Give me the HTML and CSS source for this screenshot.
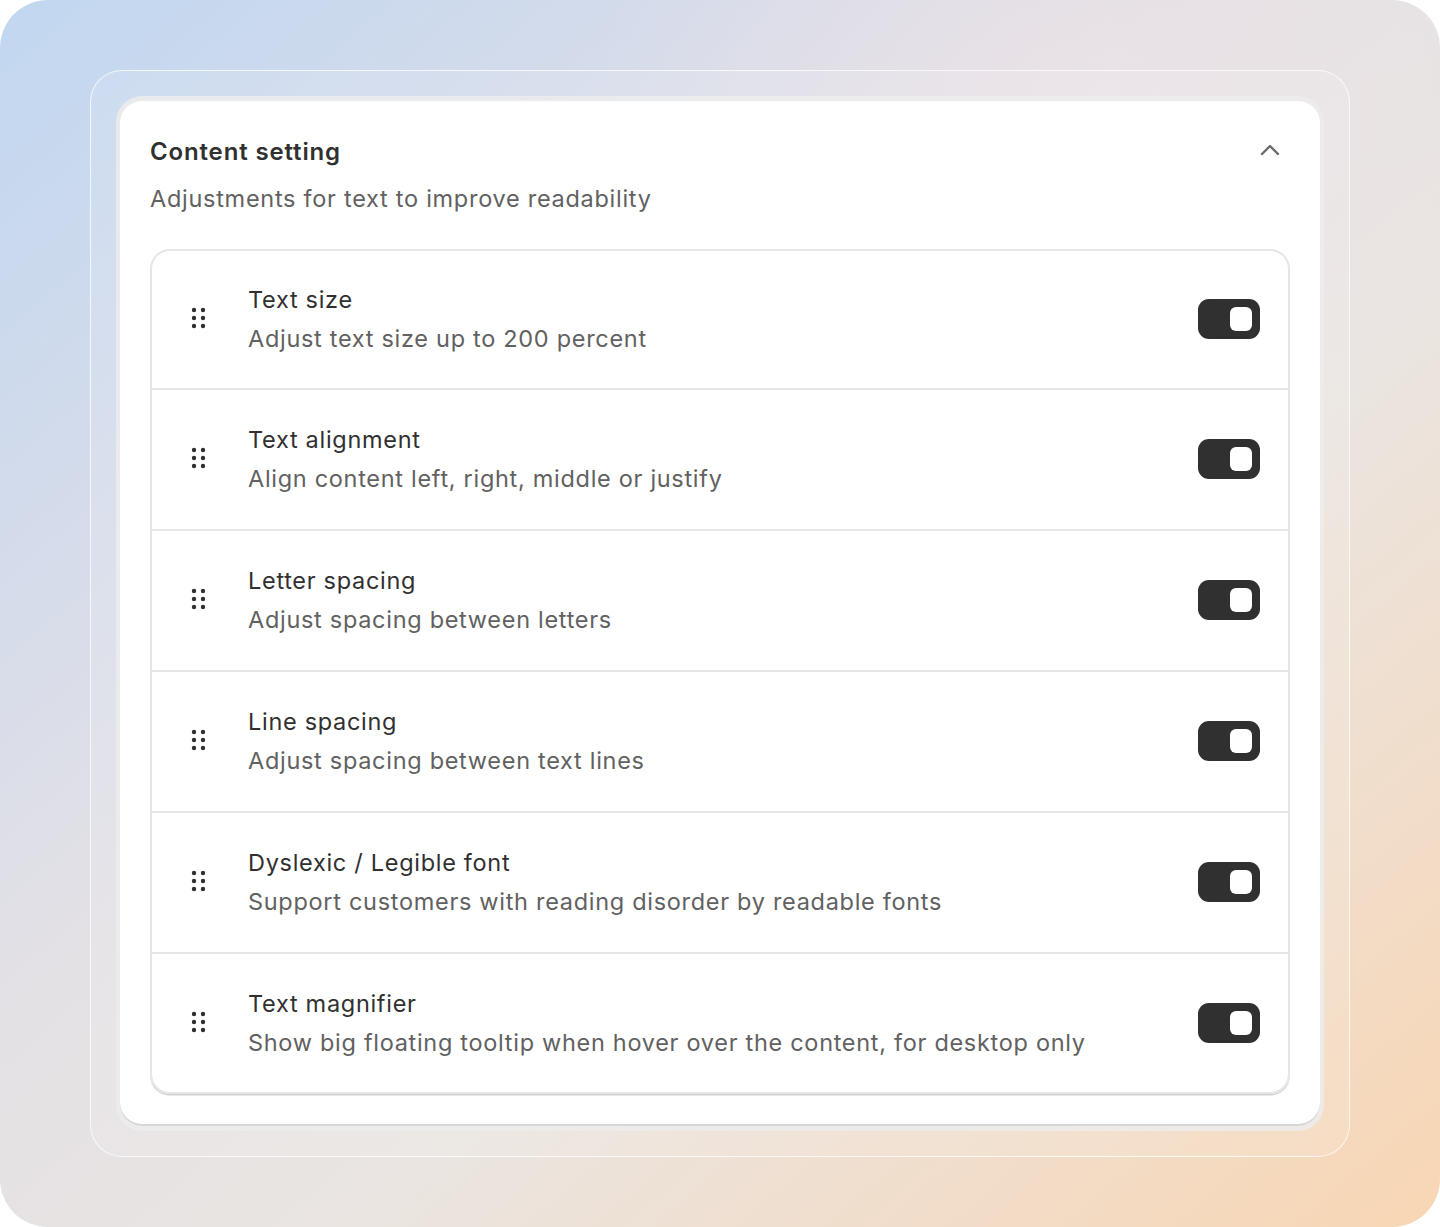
FILE: index.html
```html
<!DOCTYPE html>
<html lang="en">
<head>
<meta charset="utf-8">
<title>Content setting</title>
<link rel="stylesheet" href="styles.css">
</head>
<body>
<div class="page">
  <div class="frame">
    <div class="band">
      <section class="card">
        <header class="card-head">
          <div class="head-text">
            <h2 class="card-title">Content setting</h2>
            <p class="card-sub">Adjustments for text to improve readability</p>
          </div>
          <svg class="chevron" width="20" height="14" viewBox="0 0 20 14" aria-hidden="true"><path d="M2 11 L10 3 L18 11" fill="none" stroke="#6a6a6a" stroke-width="2.4" stroke-linecap="round" stroke-linejoin="round"/></svg>
        </header>
        <ul class="list">
          <li class="row">
            <svg class="drag" width="16" height="22" viewBox="0 0 16 22" aria-hidden="true"><g fill="#303030"><circle cx="3" cy="3" r="2.2"/><circle cx="12" cy="3" r="2.2"/><circle cx="3" cy="11" r="2.2"/><circle cx="12" cy="11" r="2.2"/><circle cx="3" cy="19" r="2.2"/><circle cx="12" cy="19" r="2.2"/></g></svg>
            <div class="row-text"><div class="row-title">Text size</div><div class="row-desc">Adjust text size up to 200 percent</div></div>
            <span class="toggle"><span class="knob"></span></span>
          </li>
          <li class="row">
            <svg class="drag" width="16" height="22" viewBox="0 0 16 22" aria-hidden="true"><g fill="#303030"><circle cx="3" cy="3" r="2.2"/><circle cx="12" cy="3" r="2.2"/><circle cx="3" cy="11" r="2.2"/><circle cx="12" cy="11" r="2.2"/><circle cx="3" cy="19" r="2.2"/><circle cx="12" cy="19" r="2.2"/></g></svg>
            <div class="row-text"><div class="row-title">Text alignment</div><div class="row-desc">Align content left, right, middle or justify</div></div>
            <span class="toggle"><span class="knob"></span></span>
          </li>
          <li class="row">
            <svg class="drag" width="16" height="22" viewBox="0 0 16 22" aria-hidden="true"><g fill="#303030"><circle cx="3" cy="3" r="2.2"/><circle cx="12" cy="3" r="2.2"/><circle cx="3" cy="11" r="2.2"/><circle cx="12" cy="11" r="2.2"/><circle cx="3" cy="19" r="2.2"/><circle cx="12" cy="19" r="2.2"/></g></svg>
            <div class="row-text"><div class="row-title">Letter spacing</div><div class="row-desc">Adjust spacing between letters</div></div>
            <span class="toggle"><span class="knob"></span></span>
          </li>
          <li class="row">
            <svg class="drag" width="16" height="22" viewBox="0 0 16 22" aria-hidden="true"><g fill="#303030"><circle cx="3" cy="3" r="2.2"/><circle cx="12" cy="3" r="2.2"/><circle cx="3" cy="11" r="2.2"/><circle cx="12" cy="11" r="2.2"/><circle cx="3" cy="19" r="2.2"/><circle cx="12" cy="19" r="2.2"/></g></svg>
            <div class="row-text"><div class="row-title">Line spacing</div><div class="row-desc">Adjust spacing between text lines</div></div>
            <span class="toggle"><span class="knob"></span></span>
          </li>
          <li class="row">
            <svg class="drag" width="16" height="22" viewBox="0 0 16 22" aria-hidden="true"><g fill="#303030"><circle cx="3" cy="3" r="2.2"/><circle cx="12" cy="3" r="2.2"/><circle cx="3" cy="11" r="2.2"/><circle cx="12" cy="11" r="2.2"/><circle cx="3" cy="19" r="2.2"/><circle cx="12" cy="19" r="2.2"/></g></svg>
            <div class="row-text"><div class="row-title">Dyslexic / Legible font</div><div class="row-desc">Support customers with reading disorder by readable fonts</div></div>
            <span class="toggle"><span class="knob"></span></span>
          </li>
          <li class="row">
            <svg class="drag" width="16" height="22" viewBox="0 0 16 22" aria-hidden="true"><g fill="#303030"><circle cx="3" cy="3" r="2.2"/><circle cx="12" cy="3" r="2.2"/><circle cx="3" cy="11" r="2.2"/><circle cx="12" cy="11" r="2.2"/><circle cx="3" cy="19" r="2.2"/><circle cx="12" cy="19" r="2.2"/></g></svg>
            <div class="row-text"><div class="row-title">Text magnifier</div><div class="row-desc">Show big floating tooltip when hover over the content, for desktop only</div></div>
            <span class="toggle"><span class="knob"></span></span>
          </li>
        </ul>
      </section>
    </div>
  </div>
</div>
</body>
</html>
```

FILE: styles.css
```css
* { box-sizing: border-box; }
html, body { margin: 0; padding: 0; background: #ffffff; }
body { font-family: Inter, "Noto Sans", "Liberation Sans", sans-serif; color: #303030; }

.page {
  width: 1440px;
  height: 1227px;
  border-radius: 48px;
  overflow: hidden;
  padding: 70px 90px;
  background:
    radial-gradient(ellipse 700px 500px at 75% 8%, rgba(238, 226, 230, 0.6), rgba(238, 226, 230, 0) 70%),
    linear-gradient(to bottom right, #c1d7f0 0%, #d3dbeb 22%, #e4e1e5 42%, #eae5e1 62%, #f2dcc7 84%, #f8d6b3 100%);
}

.frame {
  height: 1087px;
  border-radius: 32px;
  border: 1.5px solid rgba(255, 255, 255, 0.75);
  background: rgba(255, 255, 255, 0.12);
  padding: 25px;
}

.band {
  height: 1035px;
  border-radius: 26px;
  background: rgba(236, 236, 236, 0.85);
  padding: 5px 4px 5px 4px;
}

.card {
  height: 1025px;
  border-radius: 22px;
  background: #ffffff;
  padding: 34px 30px 32px 30px;
  box-shadow: inset 0 -2px 0 #d6d6d6;
  display: flex;
  flex-direction: column;
}

.card-head {
  display: flex;
  justify-content: space-between;
  align-items: flex-start;
}
.card-title {
  margin: 0;
  font-size: 24px;
  line-height: 34px;
  font-weight: 600;
  letter-spacing: 0.85px;
  color: #303030;
}
.card-sub {
  margin: 14px 0 0 0;
  font-size: 23.5px;
  line-height: 32px;
  letter-spacing: 0.72px;
  color: #616161;
}
.chevron { margin: 8px 10px 0 0; }

.list {
  list-style: none;
  margin: 34px 0 0 0;
  padding: 0;
  border: 2px solid #e6e6e6;
  border-radius: 20px;
  box-shadow: 0 1.5px 0 #cfcfcf;
  overflow: hidden;
}

.row {
  height: 141px;
  display: flex;
  align-items: center;
  padding: 0 28px 0 39px;
  border-bottom: 2px solid #e6e6e6;
}
.row:first-child { height: 139px; }
.row:last-child { border-bottom: none; height: 139px; }

.drag { flex: none; margin-bottom: 3px; }

.row-text {
  flex: 1;
  margin-left: 41px;
  display: flex;
  flex-direction: column;
  gap: 1px;
}
.row-title {
  font-size: 23.5px;
  line-height: 38px;
  letter-spacing: 0.7px;
  color: #303030;
}
.row-desc {
  font-size: 23.5px;
  line-height: 38px;
  letter-spacing: 0.7px;
  color: #616161;
}

.toggle {
  flex: none;
  width: 62px;
  height: 40px;
  margin-bottom: 1px;
  border-radius: 11px;
  background: #303030;
  display: flex;
  align-items: center;
  justify-content: flex-end;
  padding-right: 8px;
}
.knob {
  width: 22px;
  height: 24px;
  border-radius: 6px;
  background: #ffffff;
}
```
